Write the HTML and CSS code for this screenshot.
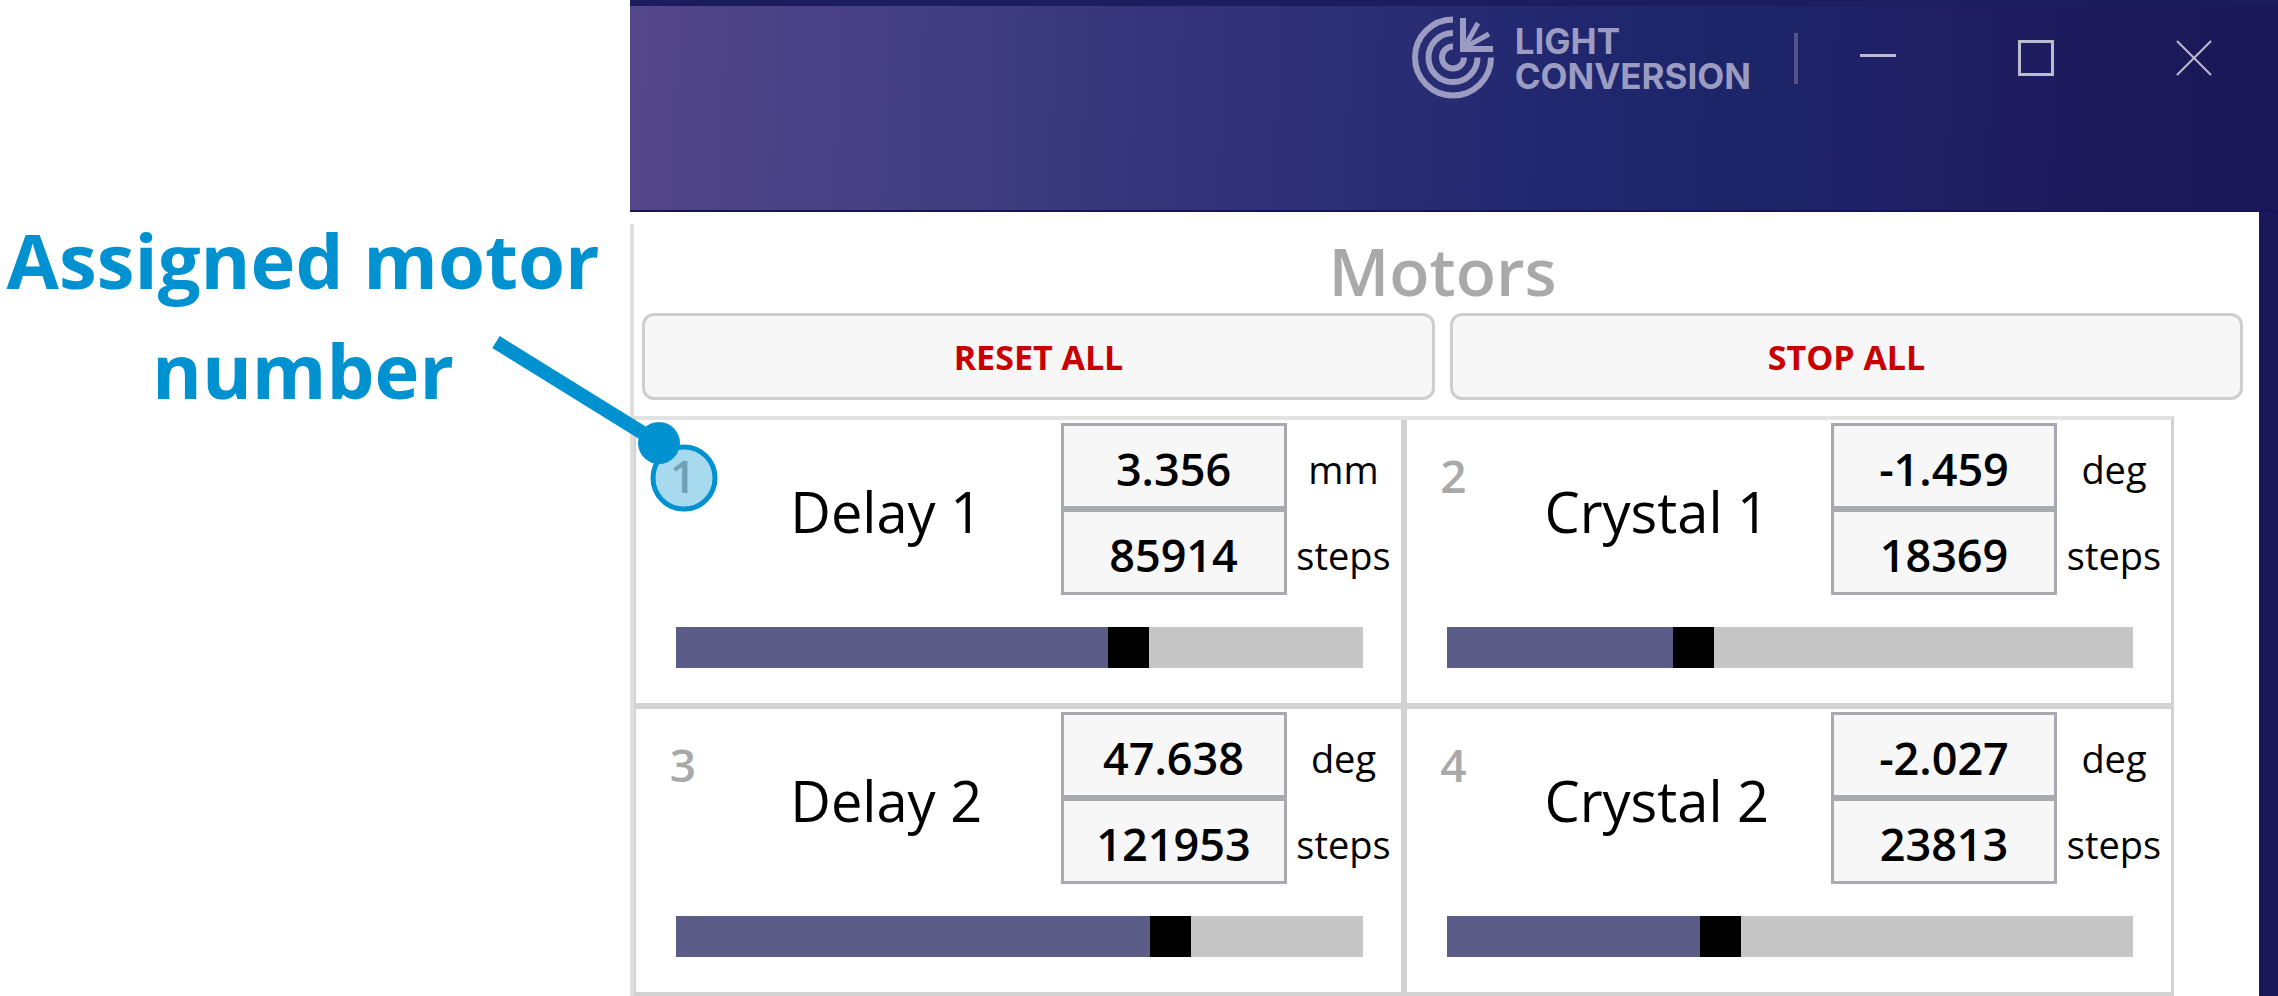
FILE: index.html
```html
<!DOCTYPE html>
<html lang="en">
<head>
<meta charset="utf-8">
<title>Motors</title>
<link rel="stylesheet" href="styles.css">
</head>
<body>
<div class="page">
  <aside class="note">Assigned motor number</aside>
  <main class="window">
    <header class="titlebar">
      <div class="brand">
        <svg class="brand-mark" viewBox="0 0 84 84" aria-hidden="true">
          <g fill="none" stroke="currentColor" stroke-width="6">
            <path d="M42 4.500A38 38 0 1 0 80 42.500"/>
            <path d="M42 18A24.500 24.500 0 1 0 66.500 42.500"/>
            <path d="M42 31.500A11 11 0 1 0 53 42.500"/>
            <path d="M52 3V34H82"/>
            <path stroke-width="5" d="M53 33L67 8M53 33L78 19"/>
          </g>
          <path fill="currentColor" d="M52 34V22L58 28L64 34Z"/>
        </svg>
        <div class="brand-name"><div>LIGHT</div><div>CONVERSION</div></div>
      </div>
      <span class="divider"></span>
      <div class="controls">
        <button class="control" aria-label="Minimize"><svg viewBox="0 0 36 36"><path d="M0 15.500H36"/></svg></button>
        <button class="control" aria-label="Maximize"><svg viewBox="0 0 36 36"><path d="M1.500 1.500H34.500V34.500H1.500Z"/></svg></button>
        <button class="control" aria-label="Close"><svg viewBox="0 0 36 36"><path class="thin" d="M1 1L35 35M35 1L1 35"/></svg></button>
      </div>
    </header>
    <section class="content">
      <div class="panel">
        <div class="top">
          <h1 class="title">Motors</h1>
          <div class="actions">
            <button class="action">RESET ALL</button>
            <button class="action">STOP ALL</button>
          </div>
        </div>
        <div class="motors">
          <article class="motor">
            <div class="row">
              <span class="number">1</span>
              <h2 class="name">Delay 1</h2>
              <div class="fields">
                <input class="field" id="p1" value="3.356"><label class="unit" for="p1">mm</label>
                <input class="field" id="s1" value="85914"><label class="unit" for="s1">steps</label>
              </div>
            </div>
            <input class="slider" type="range" aria-label="Delay 1 position" min="0" max="1000" value="670" style="--pos:67%">
          </article>
          <article class="motor">
            <div class="row">
              <span class="number">2</span>
              <h2 class="name">Crystal 1</h2>
              <div class="fields">
                <input class="field" id="p2" value="-1.459"><label class="unit" for="p2">deg</label>
                <input class="field" id="s2" value="18369"><label class="unit" for="s2">steps</label>
              </div>
            </div>
            <input class="slider" type="range" aria-label="Crystal 1 position" min="0" max="1000" value="351" style="--pos:35.1%">
          </article>
          <article class="motor">
            <div class="row">
              <span class="number">3</span>
              <h2 class="name">Delay 2</h2>
              <div class="fields">
                <input class="field" id="p3" value="47.638"><label class="unit" for="p3">deg</label>
                <input class="field" id="s3" value="121953"><label class="unit" for="s3">steps</label>
              </div>
            </div>
            <input class="slider" type="range" aria-label="Delay 2 position" min="0" max="1000" value="734" style="--pos:73.4%">
          </article>
          <article class="motor">
            <div class="row">
              <span class="number">4</span>
              <h2 class="name">Crystal 2</h2>
              <div class="fields">
                <input class="field" id="p4" value="-2.027"><label class="unit" for="p4">deg</label>
                <input class="field" id="s4" value="23813"><label class="unit" for="s4">steps</label>
              </div>
            </div>
            <input class="slider" type="range" aria-label="Crystal 2 position" min="0" max="1000" value="393" style="--pos:39.3%">
          </article>
        </div>
      </div>
    </section>
    <svg class="pointer" viewBox="0 0 230 180" aria-hidden="true">
      <circle class="halo" cx="194" cy="144" r="31"/>
      <path class="leader" d="M6 8L169 109"/>
      <circle class="dot" cx="169" cy="109" r="21"/>
    </svg>
  </main>
</div>
</body>
</html>
```
FILE: styles.css
```css
* { box-sizing: border-box; }

body {
  margin: 0;
  background: #fff;
  color: #000;
  font-family: "Open Sans", "Noto Sans", sans-serif;
}

button, input { font-family: inherit; }

.page {
  display: grid;
  grid-template-columns: minmax(0, 630fr) minmax(0, 1648fr);
  min-height: 100vh;
}

.note {
  padding: 205px 24px 0 0;
  color: #0092d0;
  font-size: 76px;
  font-weight: 700;
  line-height: 110px;
  text-align: center;
}

.window {
  position: relative;
  display: flex;
  flex-direction: column;
  background: #1b1859;
}

.titlebar {
  display: flex;
  justify-content: flex-end;
  align-items: flex-start;
  height: 212px;
  padding: 9px 66px 0 0;
  border-top: 6px solid #1c1d5f;
  border-bottom: 2px solid #17125c;
  background: linear-gradient(92deg, #54478a 0%, #494085 12%, #3c3b7e 24%, #33327a 34%, #2a2d74 46%, #20276f 57%, #1c2567 69%, #1e2068 74%, #1f1e60 81%, #1d1a5c 90%, #1b1859 100%);
}

.brand {
  display: flex;
  gap: 20px;
  color: #9c9cc2;
}

.brand-mark { width: 84px; height: 84px; }

.brand-name {
  padding-top: 9px;
  font-family: Inter, sans-serif;
  font-size: 35px;
  font-weight: 700;
  line-height: 35px;
}

.divider {
  width: 4px;
  height: 51px;
  margin: 18px 62px 0 43px;
  background: #55528a;
}

.controls {
  display: flex;
  gap: 122px;
  padding-top: 25px;
}

.control {
  width: 36px;
  height: 36px;
  padding: 0;
  border: 0;
  background: none;
}

.control svg {
  display: block;
  fill: none;
  stroke: #bdbbce;
  stroke-width: 3;
}

.thin { stroke-width: 2; }

.content {
  flex: 1;
  margin-right: 19px;
  padding-top: 12px;
  background: #fff;
}

.panel { border-left: 4px solid #dedede; }

.top { padding: 0 16px 16px 8px; }

.title {
  margin: 0;
  padding-top: 3px;
  color: #a9a9a9;
  font-size: 66px;
  font-weight: 600;
  line-height: 86px;
  text-align: center;
}

.actions {
  display: grid;
  grid-template-columns: 1fr 1fr;
  gap: 15px;
}

.action {
  height: 87px;
  border: 3px solid #cecece;
  border-radius: 12px;
  background: #f7f7f7;
  color: #c80000;
  font-size: 34px;
  font-weight: 700;
}

.motors {
  display: grid;
  grid-template-columns: 1fr 1fr;
  gap: 6px;
  margin-right: 85px;
  border: 4px solid #d2d2d2;
  border-width: 4px 3px 4px 2px;
  border-top-color: #e2e2e2;
  background: #d2d2d2;
}

.motor {
  padding: 3px 0 35px;
  background: #fff;
}

.row {
  display: grid;
  grid-template-columns: 94px 1fr 340px;
  align-items: center;
}

.number {
  align-self: start;
  padding-top: 22px;
  color: #a9a9a9;
  font-size: 46px;
  font-weight: 600;
  line-height: 60px;
  text-align: center;
}

.name {
  margin: 0;
  padding: 4px 18px 0 0;
  font-size: 56px;
  font-weight: 400;
  line-height: 76px;
  text-align: center;
}

.fields {
  display: grid;
  grid-template-columns: 226px 1fr;
  align-items: center;
}

.field {
  width: 100%;
  height: 86px;
  padding: 4px 0 0;
  border: 3px solid #a9a9b0;
  border-radius: 0;
  background: #f7f7f7;
  color: #000;
  font-size: 45px;
  font-weight: 600;
  text-align: center;
}

.unit {
  padding-top: 6px;
  font-size: 38px;
  line-height: 50px;
  text-align: center;
}

.slider {
  display: block;
  width: calc(100% - 78px);
  height: 41px;
  margin: 32px 38px 0 40px;
  appearance: none;
  background: linear-gradient(to right, #5c5c89 var(--pos), #c6c6c6 var(--pos));
}

.slider::-webkit-slider-thumb {
  appearance: none;
  width: 41px;
  height: 41px;
  background: #000;
}

.pointer {
  position: absolute;
  top: 334px;
  left: -140px;
  width: 230px;
  height: 180px;
}

.halo {
  fill: rgba(0, 146, 208, 0.34);
  stroke: #0092d0;
  stroke-width: 5;
}

.leader {
  fill: none;
  stroke: #0092d0;
  stroke-width: 14;
}

.dot { fill: #0092d0; }
```
